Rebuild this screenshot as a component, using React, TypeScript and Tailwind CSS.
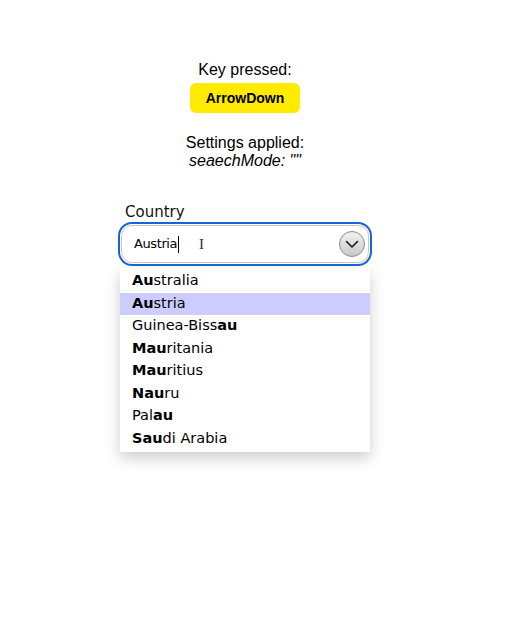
import { useState } from "react"

// [bold prefix length start, bold end] per the picture
const COUNTRIES: { name: string; from: number; to: number }[] = [
  { name: "Australia", from: 0, to: 2 },
  { name: "Austria", from: 0, to: 2 },
  { name: "Guinea-Bissau", from: 11, to: 13 },
  { name: "Mauritania", from: 0, to: 3 },
  { name: "Mauritius", from: 0, to: 3 },
  { name: "Nauru", from: 0, to: 3 },
  { name: "Palau", from: 3, to: 5 },
  { name: "Saudi Arabia", from: 0, to: 3 },
]

export default function App() {
  const [active] = useState(1)

  return (
    <div className="min-h-[641px] w-[531px] bg-white">
      <div className="w-[490px] flex flex-col items-center pt-[61px] font-['Liberation_Sans',Arial,sans-serif] text-[16px] leading-[18px] text-black">
        <div>Key pressed:</div>
        <div className="mt-[4px] w-[110px] h-[30px] rounded-[6px] bg-[#ffea00] flex items-center justify-center text-[14px] font-bold">
          ArrowDown
        </div>
        <div className="mt-[21px]">Settings applied:</div>
        <div className="italic">seaechMode: ""</div>
      </div>

      <div className="w-[490px] flex justify-center mt-[33px]">
        <div className="w-[254px] font-['DejaVu_Sans','Open_Sans',sans-serif]">
          <div className="pl-[7px] text-[15px] leading-[18px] text-[#111]">Country</div>
          <div className="relative mt-[1px] h-[44px] rounded-[14px] border-2 border-[#1565d8] p-[1px]">
            <div className="h-full rounded-[11px] border border-[#c8c8c8] bg-white flex items-center pl-[12px] pr-[3px]">
              <span className="text-[13px] tracking-[-0.4px] text-black">Austria</span>
              <span className="w-px h-[17px] bg-black ml-[1px]" />
              <span className="absolute left-[79px] top-[11px] text-[15px] leading-[18px] text-[#333] font-['Liberation_Serif',serif]">I</span>
              <div className="ml-auto w-[26px] h-[26px] rounded-full border border-[#8c8c8c] bg-gradient-to-b from-[#f2f2f2] to-[#c9c9c9] flex items-center justify-center">
                <svg width="14" height="9" viewBox="0 0 14 9" fill="none">
                  <path d="M1.5 1.5 L7 7 L12.5 1.5" stroke="#1a1a1a" strokeWidth="1.6" strokeLinecap="round" strokeLinejoin="round" />
                </svg>
              </div>
            </div>
          </div>

          <ul className="mx-[2px] mt-[2px] bg-white py-[2px] shadow-[0_6px_14px_rgba(0,0,0,0.2)]">
            {COUNTRIES.map((c, i) => (
              <li
                key={c.name}
                className={`h-[22.5px] flex items-center pl-[12px] text-[14.5px] text-black whitespace-pre ${
                  i === active ? "bg-[#ccccff]" : ""
                }`}
              >
                {c.name.slice(0, c.from)}
                <b className="font-bold">{c.name.slice(c.from, c.to)}</b>
                {c.name.slice(c.to)}
              </li>
            ))}
          </ul>
        </div>
      </div>
    </div>
  )
}
